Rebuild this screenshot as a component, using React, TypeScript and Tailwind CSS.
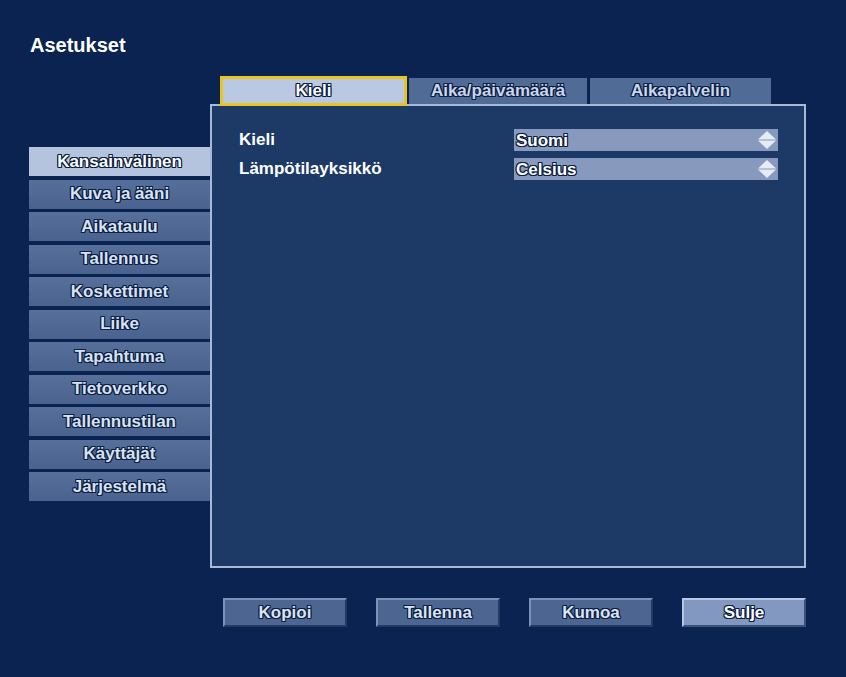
import React from "react";

const outline =
  "[text-shadow:-1px_0_#0b1d40,1px_0_#0b1d40,0_-1px_#0b1d40,0_1px_#0b1d40,-1px_-1px_#0b1d40,1px_1px_#0b1d40,1px_-1px_#0b1d40,-1px_1px_#0b1d40]";

const menu = [
  "Kansainvälinen",
  "Kuva ja ääni",
  "Aikataulu",
  "Tallennus",
  "Koskettimet",
  "Liike",
  "Tapahtuma",
  "Tietoverkko",
  "Tallennustilan",
  "Käyttäjät",
  "Järjestelmä",
];

const Spinner: React.FC = () => (
  <svg width="20" height="20" viewBox="0 0 20 20" className="mr-[1px]">
    <polygon points="10,1 19,9.5 1,9.5" fill="#e6ecf6" />
    <polygon points="1,10.5 19,10.5 10,19" fill="#e6ecf6" />
  </svg>
);

const SelectBox: React.FC<{ value: string }> = ({ value }) => (
  <div className="w-[264px] h-[22px] bg-[#8799bd] flex items-center justify-between pl-[2px]">
    <span className={`text-[17px] font-bold text-white leading-none ${outline}`}>{value}</span>
    <Spinner />
  </div>
);

const Button: React.FC<{ label: string; active?: boolean }> = ({ label, active }) => (
  <div
    className={`w-[124px] h-[29px] flex items-center justify-center border-2 ${
      active
        ? "bg-[#8398c0] border-t-[#b9c8e4] border-l-[#b9c8e4] border-b-[#3a5079] border-r-[#3a5079] text-white"
        : "bg-[#4d6691] border-t-[#7c92b8] border-l-[#7c92b8] border-b-[#243a62] border-r-[#243a62] text-[#dbe4f3]"
    }`}
  >
    <span className={`text-[17px] font-bold ${outline}`}>{label}</span>
  </div>
);

export default function App() {
  return (
    <div
      className="w-[846px] h-[677px] bg-[#0a2350] overflow-hidden"
      style={{ fontFamily: '"Liberation Sans", Arial, sans-serif' }}
    >
      <div className="pl-[30px] pt-[33px] text-[20px] leading-[24px] font-bold text-white">Asetukset</div>

      <div className="flex mt-[20px]">
        {/* left menu */}
        <div className="ml-[29px] w-[181px] pt-[70px] flex flex-col">
          {menu.map((m, i) => (
            <div
              key={m}
              className={`h-[29px] mb-[3.5px] flex items-center justify-center ${
                i === 0
                  ? "bg-[#b4c4df] text-white"
                  : "bg-gradient-to-b from-[#56709b] to-[#4a638e] text-[#d8e2f2]"
              }`}
            >
              <span className={`text-[17px] font-bold ${outline}`}>{m}</span>
            </div>
          ))}
        </div>

        {/* right column */}
        <div className="w-[596px] flex flex-col">
          <div className="h-[27px] flex items-end pl-[10px]">
            <div className="relative z-10 w-[187px] h-[30px] -mb-[2px] border-[3px] border-[#eac41f] bg-[#b9c9e3] flex items-center justify-center text-white">
              <span className={`text-[17px] font-bold ${outline}`}>Kieli</span>
            </div>
            <div className="ml-[2px] w-[178px] h-[26px] bg-[#4f6b96] flex items-center justify-center text-[#cad6ec]">
              <span className={`text-[17px] font-bold ${outline}`}>Aika/päivämäärä</span>
            </div>
            <div className="ml-[3px] w-[181px] h-[26px] bg-[#4f6b96] flex items-center justify-center text-[#cad6ec]">
              <span className={`text-[17px] font-bold ${outline}`}>Aikapalvelin</span>
            </div>
          </div>

          <div className="h-[464px] border-[2px] border-[#a6b9d9] bg-[#1d3a66] pl-[27px] pt-[23px]">
            <div className="flex items-center h-[22px]">
              <div className="w-[275px] text-[17px] font-bold text-white">Kieli</div>
              <SelectBox value="Suomi" />
            </div>
            <div className="flex items-center h-[22px] mt-[7px]">
              <div className="w-[275px] text-[17px] font-bold text-white">Lämpötilayksikkö</div>
              <SelectBox value="Celsius" />
            </div>
          </div>

          <div className="flex gap-[29px] pl-[13px] mt-[30px]">
            <Button label="Kopioi" />
            <Button label="Tallenna" />
            <Button label="Kumoa" />
            <Button label="Sulje" active />
          </div>
        </div>
      </div>
    </div>
  );
}
